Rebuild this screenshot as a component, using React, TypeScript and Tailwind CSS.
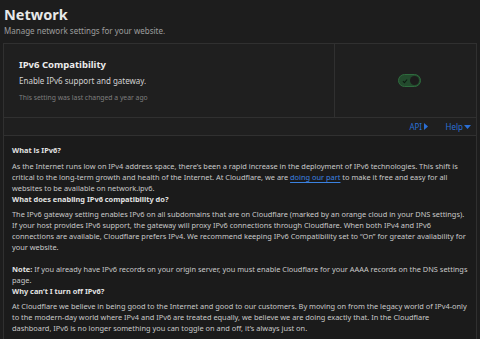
export default function App() {
  return (
    <div
      className="min-h-[339px] bg-[#1d1d1d] text-[#d9d9d9] px-[3px] pt-[4px] overflow-hidden"
      style={{ fontFamily: '"Noto Sans", "Open Sans", sans-serif' }}
    >
      <h1 className="text-[14.5px] font-bold leading-[20px] text-[#e8e8e8] pl-[1px]">Network</h1>
      <p className="text-[8px] leading-[12px] text-[#9e9e9e] mt-[1px] pl-[1px]">Manage network settings for your website.</p>

      <div className="mt-[6px] border border-[#303030] bg-[#1f1f1f]">
        <div className="flex h-[74px] border-b border-[#303030]">
          <div className="flex-1 pl-[15px] pt-[15px] border-r border-[#303030]">
            <h2 className="text-[9.5px] font-bold leading-[12px] text-[#ececec]">IPv6 Compatibility</h2>
            <p className="text-[8px] leading-[11px] text-[#d2d2d2] mt-[3.5px]">Enable IPv6 support and gateway.</p>
            <p className="text-[6.8px] leading-[10px] text-[#7e7e7e] mt-[7.5px]">This setting was last changed a year ago</p>
          </div>
          <div className="w-[141px] flex items-center justify-center pl-[7px]">
            <div className="w-[23px] h-[13px] rounded-full bg-[#234a2d] border border-[#2f6b3e] flex items-center justify-between pl-[3px] pr-[1px]">
              <svg width="6" height="6" viewBox="0 0 8 8">
                <path d="M1.2 4.3 L3.2 6.2 L6.8 2" fill="none" stroke="#0f1a12" strokeWidth="1.4" />
              </svg>
              <div className="w-[9px] h-[9px] rounded-full bg-[#1c1c1c]" />
            </div>
          </div>
        </div>

        <div className="flex justify-end items-center gap-[18px] h-[18px] pr-[5px] border-b border-[#303030] text-[8px] text-[#2b6fd4]">
          <span className="flex items-center gap-[1.5px]">
            API
            <svg width="4" height="7" viewBox="0 0 4 7"><path d="M0 0 L4 3.5 L0 7 Z" fill="#2b6fd4" /></svg>
          </span>
          <span className="flex items-center gap-[1px]">
            Help
            <svg width="7" height="4" viewBox="0 0 7 4"><path d="M0 0 L7 0 L3.5 4 Z" fill="#2b6fd4" /></svg>
          </span>
        </div>

        <div className="bg-[#1b1b1b] pl-[8px] pr-[3px] pt-[8.5px] pb-[10px] text-[7.4px] leading-[11px] text-[#c9c9c9]">
          <h3 className="font-bold text-[#e2e2e2]">What is IPv6?</h3>
          <p className="mt-[5px]">
            As the Internet runs low on IPv4 address space, there’s been a rapid increase in the deployment of IPv6 technologies. This shift is
            <br />
            critical to the long-term growth and health of the Internet. At Cloudflare, we are{" "}
            <span className="text-[#3b82e0] underline underline-offset-[1.5px]">doing our part</span> to make it free and easy for all
            <br />
            websites to be available on network.ipv6.
          </p>
          <h3 className="font-bold text-[#e2e2e2]">What does enabling IPv6 compatibility do?</h3>
          <p className="mt-[4px]">
            The IPv6 gateway setting enables IPv6 on all subdomains that are on Cloudflare (marked by an orange cloud in your DNS settings).
            <br />
            If your host provides IPv6 support, the gateway will proxy IPv6 connections through Cloudflare. When both IPv4 and IPv6
            <br />
            connections are available, Cloudflare prefers IPv4. We recommend keeping IPv6 Compatibility set to “On” for greater availability for
            <br />
            your website.
          </p>
          <p className="mt-[11px]">
            <span className="font-bold text-[#e2e2e2]">Note:</span> If you already have IPv6 records on your origin server, you must enable Cloudflare for your AAAA records on the DNS settings
            <br />
            page.
          </p>
          <h3 className="font-bold text-[#e2e2e2]">Why can’t I turn off IPv6?</h3>
          <p className="mt-[4px]">
            At Cloudflare we believe in being good to the Internet and good to our customers. By moving on from the legacy world of IPv4-only
            <br />
            to the modern-day world where IPv4 and IPv6 are treated equally, we believe we are doing exactly that. In the Cloudflare
            <br />
            dashboard, IPv6 is no longer something you can toggle on and off, it’s always just on.
          </p>
        </div>
      </div>
    </div>
  );
}
